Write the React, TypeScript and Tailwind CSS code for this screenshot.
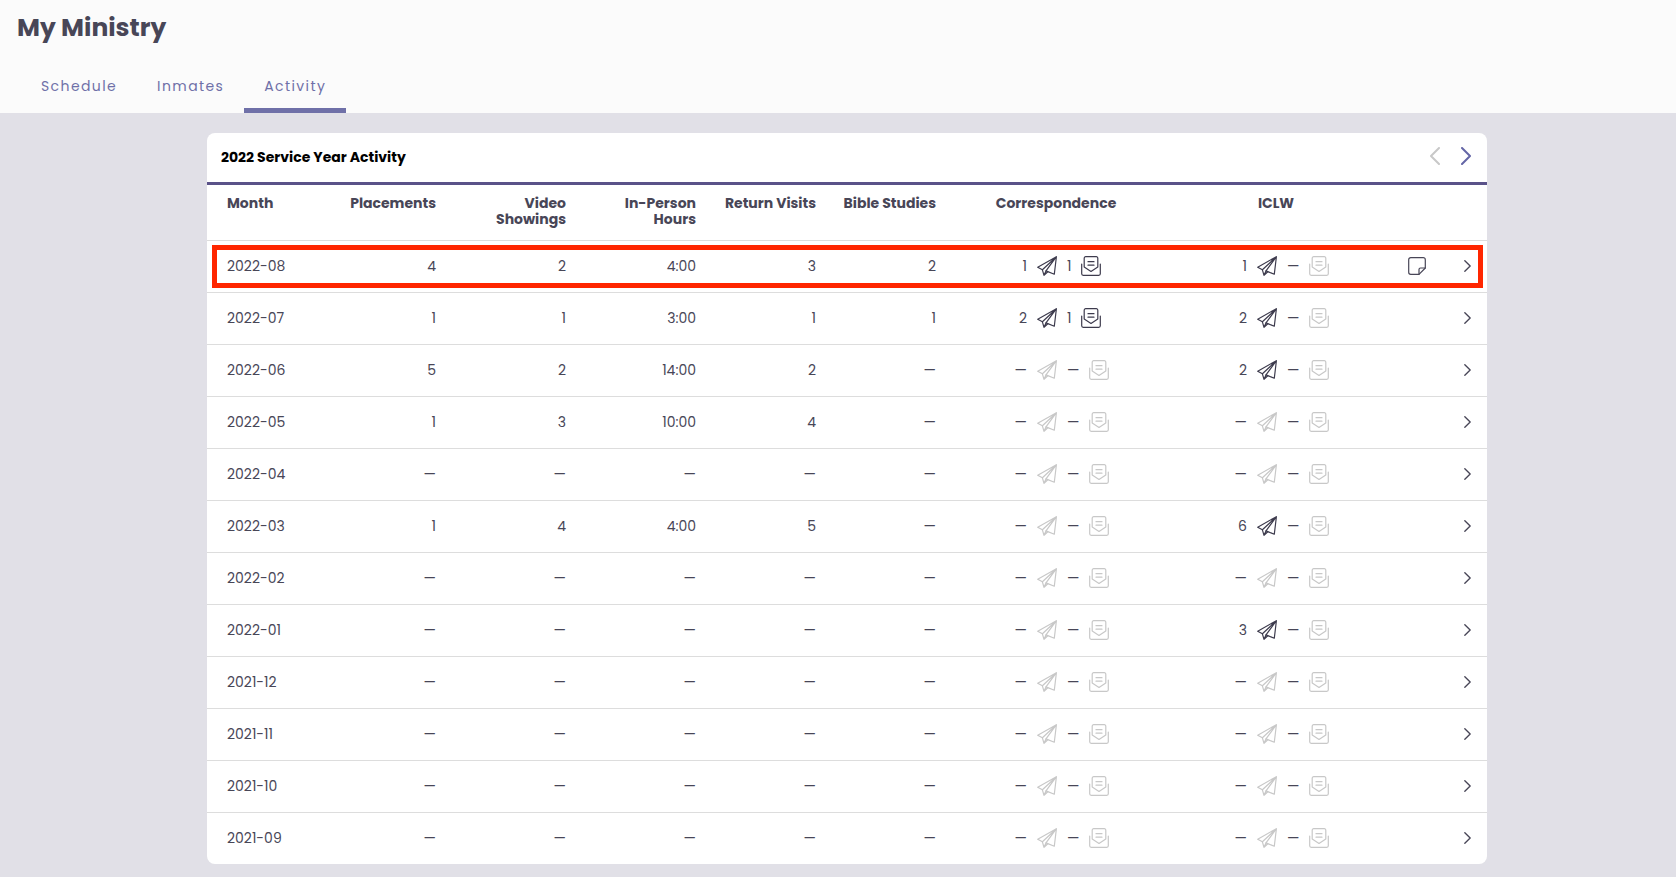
import React, { useState } from 'react';
import clsx from 'clsx';

type Cell = number | string | null;

interface MonthActivity {
  month: string;
  totals: Cell[];
  correspondence: [Cell, Cell];
  iclw: [Cell, Cell];
  hasNote?: boolean;
}

const NONE: [Cell, Cell] = [null, null];
const EMPTY: Cell[] = [null, null, null, null, null];

// totals: placements, video showings, in-person hours, return visits, bible studies
const activity: MonthActivity[] = [
  { month: '2022-08', totals: [4, 2, '4:00', 3, 2], correspondence: [1, 1], iclw: [1, null], hasNote: true },
  { month: '2022-07', totals: [1, 1, '3:00', 1, 1], correspondence: [2, 1], iclw: [2, null] },
  { month: '2022-06', totals: [5, 2, '14:00', 2, null], correspondence: NONE, iclw: [2, null] },
  { month: '2022-05', totals: [1, 3, '10:00', 4, null], correspondence: NONE, iclw: NONE },
  { month: '2022-04', totals: EMPTY, correspondence: NONE, iclw: NONE },
  { month: '2022-03', totals: [1, 4, '4:00', 5, null], correspondence: NONE, iclw: [6, null] },
  { month: '2022-02', totals: EMPTY, correspondence: NONE, iclw: NONE },
  { month: '2022-01', totals: EMPTY, correspondence: NONE, iclw: [3, null] },
  { month: '2021-12', totals: EMPTY, correspondence: NONE, iclw: NONE },
  { month: '2021-11', totals: EMPTY, correspondence: NONE, iclw: NONE },
  { month: '2021-10', totals: EMPTY, correspondence: NONE, iclw: NONE },
  { month: '2021-09', totals: EMPTY, correspondence: NONE, iclw: NONE },
];

const totalHeadings = ['Placements', 'Video Showings', 'In-Person Hours', 'Return Visits', 'Bible Studies'];

interface IconProps {
  className?: string;
}

const iconProps = {
  fill: 'none',
  stroke: 'currentColor',
  strokeLinecap: 'round' as const,
  strokeLinejoin: 'round' as const,
  'aria-hidden': true,
};

const PlaneIcon: React.FC<IconProps> = ({ className }) => (
  <svg viewBox="0 0 20 20" strokeWidth="1.2" className={clsx('size-5 shrink-0', className)} {...iconProps}>
    <path d="M19.4.7.7 11.200l4.700 2.600L19.400.7 9 14.900l8.300 3.300L19.400.7Z" />
    <path d="M5.400 13.800 7 19.300l3.800-3.600M7 19.300l2-4.400" />
  </svg>
);

const LetterIcon: React.FC<IconProps> = ({ className }) => (
  <svg viewBox="0 0 20 20" strokeWidth="1.2" className={clsx('size-5 shrink-0', className)} {...iconProps}>
    <path d="M3.200 11V2.200A1.500 1.500 0 0 1 4.700.7h10.600a1.500 1.500 0 0 1 1.500 1.500V11L10 15.400 3.200 11Z" />
    <path d="M.7 8v9.800a1.500 1.500 0 0 0 1.500 1.500h15.600a1.500 1.500 0 0 0 1.500-1.500V8" />
    <path d="M7 5.700h6M7 9.200h6" />
  </svg>
);

const NoteIcon: React.FC<IconProps> = ({ className }) => (
  <svg viewBox="0 0 18 18" strokeWidth="1.2" className={clsx('size-[18px]', className)} {...iconProps}>
    <path d="M17.300 11V2.700a2 2 0 0 0-2-2H2.700a2 2 0 0 0-2 2v12.600a2 2 0 0 0 2 2H11L17.300 11Z" />
    <path d="M11 17.300V12.500A1.500 1.500 0 0 1 12.500 11h4.800" />
  </svg>
);

const ChevronIcon: React.FC<IconProps & { left?: boolean }> = ({ left, className }) => (
  <svg viewBox="0 0 10 18" strokeWidth="2" className={className} {...iconProps}>
    <path d={left ? 'M9 1 1 9l8 8' : 'M1 1l8 8-8 8'} />
  </svg>
);

const LetterCounts: React.FC<{ counts: [Cell, Cell] }> = ({ counts: [sent, received] }) => (
  <div className="flex items-center gap-2.5 pl-[57px]">
    <span className="w-6 text-right">{sent ?? '—'}</span>
    <PlaneIcon className={sent === null ? 'text-[#c8c8c8]' : 'text-[#3d3b4d]'} />
    <span>{received ?? '—'}</span>
    <LetterIcon className={received === null ? 'text-[#c8c8c8]' : 'text-[#3d3b4d]'} />
  </div>
);

const tabs = ['Schedule', 'Inmates', 'Activity'];

export default function App() {
  const [activeTab, setActiveTab] = useState('Activity');

  return (
    <div className="min-h-screen bg-[#e1e0e7] font-[Poppins,Inter,sans-serif] text-sm text-[#484657]">
      <header className="bg-[#fbfbfb]">
        <h1 className="px-[17px] pt-2.5 text-[25px] leading-9 font-bold">My Ministry</h1>
        <nav className="flex pt-4 pl-[21px]">
          {tabs.map((tab) => (
            <button
              key={tab}
              type="button"
              onClick={() => setActiveTab(tab)}
              className={clsx(
                'border-b-5 px-5 pt-[13px] pb-[11px] text-sm leading-[22px] tracking-widest text-[#6f70a8]',
                activeTab === tab ? 'border-[#6f70a8]' : 'border-transparent',
              )}
            >
              {tab}
            </button>
          ))}
        </nav>
      </header>

      <main className="pt-5 pb-3 pl-[18px]">
        <section className="mx-auto max-w-7xl rounded-lg bg-white">
          <div className="flex h-[52px] items-center justify-between border-b-3 border-[#5a5289] pr-4 pb-0.5 pl-3.5">
            <h2 className="font-bold text-black">2022 Service Year Activity</h2>
            <div className="flex items-center gap-[21px] pb-0.5">
              <button type="button" aria-label="Previous year" disabled className="text-[#c8c8c8]">
                <ChevronIcon left className="h-[18px] w-2.5" />
              </button>
              <button type="button" aria-label="Next year" className="text-[#6466a6]">
                <ChevronIcon className="h-[18px] w-2.5" />
              </button>
            </div>
          </div>

          <table className="w-full table-fixed">
            <colgroup>
              <col />
              <col className="w-[130px]" />
              <col className="w-[130px]" />
              <col className="w-[130px]" />
              <col className="w-[120px]" />
              <col className="w-[120px]" />
              <col className="w-[220px]" />
              <col className="w-[220px]" />
              <col className="w-[60px]" />
              <col className="w-[41px]" />
            </colgroup>
            <thead>
              <tr className="h-[55px] border-b border-[#dddddd] align-top leading-4">
                <th scope="col" className="pt-2.5 pl-5 text-left font-bold">Month</th>
                {totalHeadings.map((heading) => (
                  <th key={heading} scope="col" className="px-2.5 pt-2.5 text-right font-bold">
                    {heading}
                  </th>
                ))}
                <th scope="col" className="pt-2.5 text-center font-bold">Correspondence</th>
                <th scope="col" className="pt-2.5 text-center font-bold">ICLW</th>
                <td />
                <td />
              </tr>
            </thead>
            <tbody>
              {activity.map((row, index) => (
                <tr key={row.month} className="relative h-[52px] border-b border-[#dddddd] last:border-b-0">
                  <td className="pl-5">
                    {row.month}
                    {index === 0 && (
                      <div className="pointer-events-none absolute top-[5px] right-1 bottom-[3px] left-[5px] border-[5px] border-[#ff2600]" />
                    )}
                  </td>
                  {row.totals.map((total, i) => (
                    <td key={i} className="px-2.5 text-right">{total ?? '—'}</td>
                  ))}
                  <td><LetterCounts counts={row.correspondence} /></td>
                  <td><LetterCounts counts={row.iclw} /></td>
                  <td className="pl-[22px]">{row.hasNote && <NoteIcon />}</td>
                  <td>
                    <button type="button" aria-label={`Open ${row.month}`} className="block pl-[18px]">
                      <ChevronIcon className="h-3 w-[7px]" />
                    </button>
                  </td>
                </tr>
              ))}
            </tbody>
          </table>
        </section>
      </main>
    </div>
  );
}
